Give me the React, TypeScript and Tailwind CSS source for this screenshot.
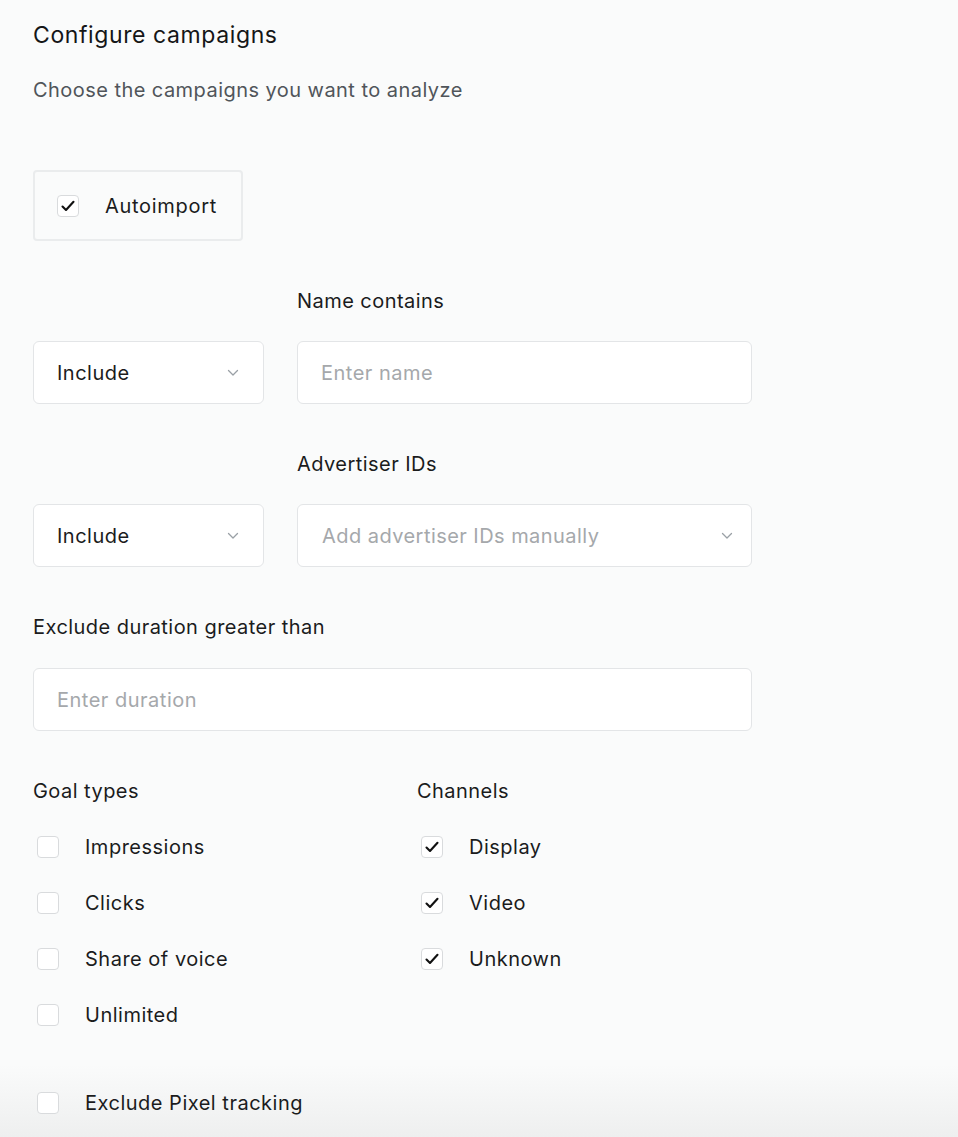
import React from "react";

function Check({ checked }: { checked: boolean }) {
  return (
    <span className="flex h-[22px] w-[22px] shrink-0 items-center justify-center rounded-[4px] border border-[#d9dbdd] bg-white">
      {checked && (
        <svg width="14" height="12" viewBox="0 0 14 12" fill="none">
          <path d="M1.5 6.5 L5 10 L12.5 1.8" stroke="#111" strokeWidth="2.1" strokeLinecap="round" strokeLinejoin="round" />
        </svg>
      )}
    </span>
  );
}

function Chevron() {
  return (
    <svg width="12" height="8" viewBox="0 0 12 8" fill="none">
      <path d="M1.5 1.5 L6 6 L10.5 1.5" stroke="#9aa0a6" strokeWidth="1.3" strokeLinecap="round" strokeLinejoin="round" />
    </svg>
  );
}

function CheckRow({ label, checked }: { label: string; checked: boolean }) {
  return (
    <div className="flex h-[56px] items-center gap-[26px] pl-[4px]">
      <Check checked={checked} />
      <span className="text-[20px] tracking-[0.5px] text-[#1b1c1d]">{label}</span>
    </div>
  );
}

function Select({ text }: { text: string }) {
  return (
    <div className="flex h-[63px] w-[231px] items-center justify-between rounded-[6px] border border-[#e3e5e7] bg-white pl-[23px] pr-[24px]">
      <span className="text-[20px] tracking-[0.5px] text-[#1b1c1d]">{text}</span>
      <Chevron />
    </div>
  );
}

export default function App() {
  return (
    <div
      className="min-h-[1137px] w-full overflow-hidden bg-[linear-gradient(to_bottom,#fafbfb_1065px,#eeefef_1137px)] px-[33px] pt-[20px]"
      style={{ fontFamily: "Inter, 'Noto Sans', sans-serif" }}
    >
      <h1 className="text-[23px] leading-[30px] tracking-[0.6px] text-[#151617]">Configure campaigns</h1>
      <p className="mt-[26px] text-[20px] leading-[28px] tracking-[0.45px] text-[#50555a]">
        Choose the campaigns you want to analyze
      </p>

      <div className="mt-[66px] flex h-[71px] w-[210px] items-center gap-[26px] rounded-[4px] border-2 border-[#eaeced] pl-[22px]">
        <Check checked={true} />
        <span className="text-[20px] tracking-[0.7px] text-[#1b1c1d]">Autoimport</span>
      </div>

      <div className="mt-[46px] flex gap-[33px]">
        <div className="flex flex-col justify-end">
          <Select text="Include" />
        </div>
        <div className="flex flex-col">
          <span className="text-[20px] leading-[28px] tracking-[0.45px] text-[#1b1c1d]">Name contains</span>
          <div className="mt-[26px] flex h-[63px] w-[455px] items-center rounded-[6px] border border-[#e3e5e7] bg-white pl-[23px]">
            <span className="text-[20px] tracking-[0.5px] text-[#a5a8ab]">Enter name</span>
          </div>
        </div>
      </div>

      <div className="mt-[46px] flex gap-[33px]">
        <div className="flex flex-col justify-end">
          <Select text="Include" />
        </div>
        <div className="flex flex-col">
          <span className="text-[20px] leading-[28px] tracking-[0.45px] text-[#1b1c1d]">Advertiser IDs</span>
          <div className="mt-[26px] flex h-[63px] w-[455px] items-center justify-between rounded-[6px] border border-[#e3e5e7] bg-white pl-[24px] pr-[18px]">
            <span className="text-[20px] tracking-[0.45px] text-[#a5a8ab]">Add advertiser IDs manually</span>
            <Chevron />
          </div>
        </div>
      </div>

      <div className="mt-[46px] flex flex-col">
        <span className="text-[20px] leading-[28px] tracking-[0.45px] text-[#1b1c1d]">Exclude duration greater than</span>
        <div className="mt-[27px] flex h-[63px] w-[719px] items-center rounded-[6px] border border-[#e3e5e7] bg-white pl-[23px]">
          <span className="text-[20px] tracking-[0.5px] text-[#a5a8ab]">Enter duration</span>
        </div>
      </div>

      <div className="mt-[46px] flex">
        <div className="flex w-[384px] flex-col">
          <span className="text-[20px] leading-[28px] tracking-[0.45px] text-[#1b1c1d]">Goal types</span>
          <div className="mt-[14px] flex flex-col">
            <CheckRow label="Impressions" checked={false} />
            <CheckRow label="Clicks" checked={false} />
            <CheckRow label="Share of voice" checked={false} />
            <CheckRow label="Unlimited" checked={false} />
          </div>
        </div>
        <div className="flex flex-col">
          <span className="text-[20px] leading-[28px] tracking-[0.45px] text-[#1b1c1d]">Channels</span>
          <div className="mt-[14px] flex flex-col">
            <CheckRow label="Display" checked={true} />
            <CheckRow label="Video" checked={true} />
            <CheckRow label="Unknown" checked={true} />
          </div>
        </div>
      </div>

      <div className="mt-[32px]">
        <CheckRow label="Exclude Pixel tracking" checked={false} />
      </div>
    </div>
  );
}
